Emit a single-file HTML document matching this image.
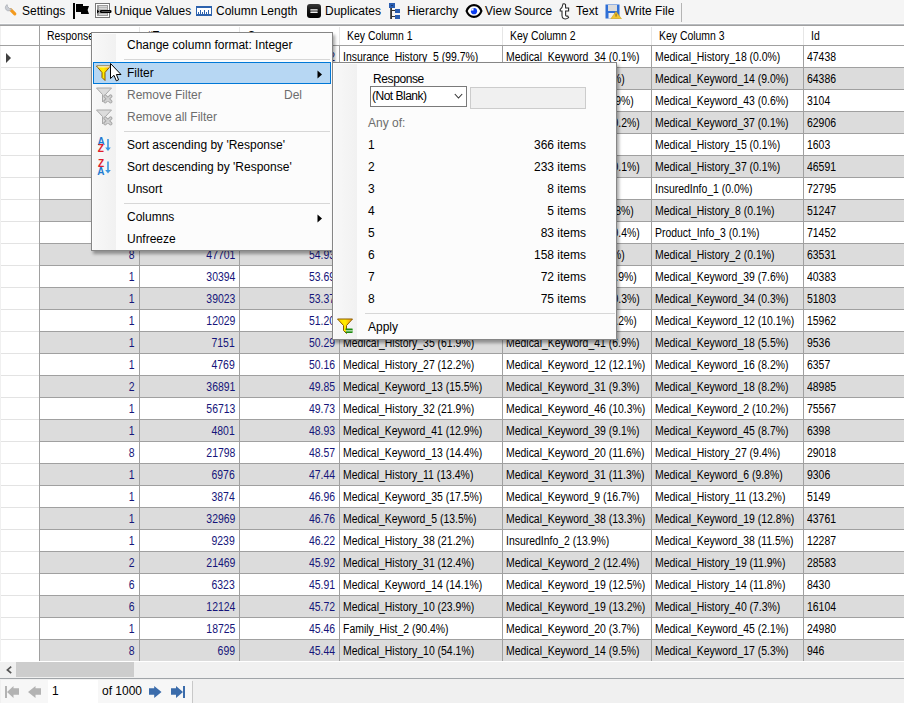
<!DOCTYPE html>
<html><head><meta charset="utf-8">
<style>
*{box-sizing:border-box;margin:0;padding:0}
html,body{width:904px;height:703px;overflow:hidden;background:#f0f0f0;font-family:"Liberation Sans",sans-serif;position:relative}
.a{position:absolute}
/* toolbar */
#tb{position:absolute;left:0;top:0;width:904px;height:24px;background:#f5f5f5}
#tb .ti{position:absolute;top:0;height:23px;line-height:22px;font-size:12px;color:#000;white-space:nowrap}
/* grid */
#hdr{position:absolute;left:0;top:26px;width:904px;height:19px;background:#fff}
#hdr span{position:absolute;top:1px;line-height:19px;font-size:12px;white-space:nowrap;color:#000;transform:scaleX(0.87);transform-origin:0 0}
.r{position:absolute;left:0;width:904px;height:22px;background:#fff;border-bottom:1px solid #a0a0a0}
.r.g{background:#dcdcdc}
.r span{position:absolute;top:1px;line-height:21px;font-size:12px;white-space:nowrap;color:#000;transform:scaleX(0.87);transform-origin:0 0}
.r span.n{color:#15157a;text-align:right;transform-origin:100% 0}
.r span.rt{transform-origin:100% 0}
.vl{position:absolute;width:1px;background:#a0a0a0}
.menu{position:absolute;background:#fcfcfc;border:1px solid #868686;box-shadow:2px 3px 3px rgba(0,0,0,0.35)}
.mi{position:absolute;left:35px;font-size:12px;line-height:22px;white-space:nowrap;color:#000}
.sep{position:absolute;height:1px;background:#d7d7d7}
</style></head><body>
<div id="tb">
  <div class="a" style="left:0;top:23px;width:904px;height:1px;background:#fbfbfb"></div>
  <div class="ti" style="left:22px">Settings</div>
  <div class="ti" style="left:114px">Unique Values</div>
  <div class="ti" style="left:216px">Column Length</div>
  <div class="ti" style="left:325px">Duplicates</div>
  <div class="ti" style="left:407px">Hierarchy</div>
  <div class="ti" style="left:485px">View Source</div>
  <div class="ti" style="left:576px">Text</div>
  <div class="ti" style="left:624px">Write File</div>

  <!-- toolbar icons -->
  <svg class="a" style="left:4px;top:3px" width="14" height="14" viewBox="0 0 14 14">
    <path d="M10.8 10.8 L6.6 6.6" stroke="#f39a1e" stroke-width="3.2" stroke-linecap="round"/>
    <path d="M3.2 1.6 A3.3 3.3 0 1 0 7.6 6 L5.6 5.6 L3.6 3.6 Z" fill="#c9ccd3" stroke="#a9adb5" stroke-width="0.7"/>
  </svg>
  <svg class="a" style="left:73px;top:3px" width="17" height="16" viewBox="0 0 17 16">
    <rect x="0" y="0" width="2" height="16" fill="#000"/>
    <path d="M3 1H10V3H16L14.6 7L16 11H8V9H3Z" fill="#000"/>
  </svg>
  <svg class="a" style="left:95px;top:3px" width="17" height="15" viewBox="0 0 17 15">
    <rect x="0.5" y="0.5" width="14" height="14" fill="#fff" stroke="#777"/>
    <rect x="2" y="2" width="11" height="11" fill="#9c9c9c"/>
    <rect x="4" y="3.2" width="8" height="1.2" fill="#e4e4e4"/>
    <rect x="4" y="5.2" width="8" height="1.2" fill="#e4e4e4"/>
    <rect x="4" y="10.6" width="8" height="1.2" fill="#e4e4e4"/>
    <rect x="5" y="7" width="11.5" height="3" rx="1.3" fill="#000"/>
    <rect x="6.5" y="8.2" width="8.5" height="0.7" fill="#777"/>
    <path d="M2 6.6 L4.4 8.5 L2 10.4Z" fill="#000"/>
  </svg>
  <svg class="a" style="left:196px;top:6px" width="16" height="10" viewBox="0 0 16 10">
    <rect x="0" y="0" width="16" height="10" fill="#2d62ad"/>
    <rect x="1" y="2" width="14" height="6" fill="#fff"/>
    <path d="M2.5 6V8M4.5 4V8M6.5 6V8M8.5 4V8M10.5 6V8M12.5 4V8" stroke="#2d62ad" stroke-width="1"/>
  </svg>
  <svg class="a" style="left:307px;top:4px" width="14" height="14" viewBox="0 0 14 14">
    <defs><linearGradient id="dg" x1="0" y1="0" x2="0" y2="1"><stop offset="0" stop-color="#3a3a3a"/><stop offset="0.5" stop-color="#111"/><stop offset="1" stop-color="#000"/></linearGradient></defs>
    <rect x="0" y="0" width="14" height="14" rx="3" fill="url(#dg)"/>
    <rect x="3.2" y="5.2" width="7.6" height="1.4" rx="0.7" fill="#fff"/>
    <rect x="3.2" y="7.6" width="7.6" height="1.4" rx="0.7" fill="#eee"/>
  </svg>
  <svg class="a" style="left:389px;top:3px" width="12" height="17" viewBox="0 0 12 17">
    <rect x="0" y="0" width="6" height="5" fill="#2a5db0"/>
    <rect x="2" y="2" width="2" height="1" fill="#163a70"/>
    <rect x="1.2" y="5" width="1.8" height="11" fill="#333"/>
    <path d="M3 7.5H6M3 13.5H6" stroke="#333" stroke-width="1"/>
    <rect x="6" y="6" width="5" height="4" fill="#2a5db0"/>
    <rect x="6" y="12" width="5" height="4" fill="#2a5db0"/>
  </svg>
  <svg class="a" style="left:465px;top:3px" width="18" height="16" viewBox="0 0 18 16">
    <path d="M1.6 8 C3.2 3.4 5.8 2.1 9 2.1 C12.2 2.1 14.8 3.4 16.4 8 C14.8 12.6 12.2 13.9 9 13.9 C5.8 13.9 3.2 12.6 1.6 8Z" fill="#fff" stroke="#000" stroke-width="2.2"/>
    <circle cx="9" cy="8.2" r="3.1" fill="#0a3cf0"/>
    <path d="M5.9 7.6 Q6.1 5.3 8.5 5.1 L8.5 7.6Z" fill="#fff"/>
  </svg>
  <svg class="a" style="left:559px;top:3px" width="12" height="17" viewBox="0 0 12 17">
    <path d="M4 1 Q5.5 0.4 6.5 1.5 L6.6 5 L9.6 5 L9.6 8 L6.6 8 L6.6 12.2 Q6.8 13.4 8.8 13 L9.6 14.6 Q7 16.6 4.6 15.6 Q3 14.8 3 12.5 L3 8 L1.2 8 L1.2 6.4 Q3.4 5 4 1Z" fill="#fff" stroke="#2a2a2a" stroke-width="1.1"/>
  </svg>
  <svg class="a" style="left:605px;top:4px" width="17" height="15" viewBox="0 0 17 15">
    <rect x="0.5" y="0.5" width="14" height="14" fill="#2f6fd6"/>
    <rect x="3" y="1" width="9" height="6" fill="#dcdcdc"/>
    <rect x="3.5" y="9" width="6" height="5.5" fill="#f0f0f0"/>
    <path d="M11 7.5 L16.5 14.8 L5.8 14.8 Z" fill="#f2c531" stroke="#c99a10" stroke-width="0.5"/>
    <rect x="10.6" y="9.6" width="0.9" height="3" fill="#7a5a10"/>
  </svg>
  <div class="a" style="left:681px;top:3px;width:1px;height:19px;background:#b4b4b4"></div>
</div>
<div class="a" style="left:0;top:24px;width:904px;height:1px;background:#b9bcc0"></div>
<div class="a" style="left:0;top:25px;width:904px;height:1px;background:#a0a0a0"></div>

<div id="hdr">
  <span style="left:47px">Response</span>
  <span style="left:147px">#Tr</span>
  <span style="left:248px">Score</span>
  <span style="left:347px">Key Column 1</span>
  <span style="left:510px">Key Column 2</span>
  <span style="left:659px">Key Column 3</span>
  <span style="left:811px">Id</span>
</div>
<div class="a" style="left:0;top:45px;width:904px;height:1px;background:#a0a0a0"></div>

<div class="r" style="top:46px">
<span class="n" style="right:769px">1</span>
<span class="n" style="right:669px">1</span>
<span class="n" style="right:569px">57.22</span>
<span class="t" style="left:343px">Insurance_History_5 (99.7%)</span>
<span class="t" style="left:506px">Medical_Keyword_34 (0.1%)</span>
<span class="t" style="left:655px">Medical_History_18 (0.0%)</span>
<span class="t" style="left:807px">47438</span>
</div>
<div class="r g" style="top:68px">
<span class="n" style="right:769px"></span>
<span class="n" style="right:669px"></span>
<span class="n" style="right:569px"></span>
<span class="t" style="left:343px"></span>
<span class="t rt" style="right:279px">Medical_Keyword_3 (5%)</span>
<span class="t" style="left:655px">Medical_Keyword_14 (9.0%)</span>
<span class="t" style="left:807px">64386</span>
</div>
<div class="r" style="top:90px">
<span class="n" style="right:769px"></span>
<span class="n" style="right:669px"></span>
<span class="n" style="right:569px"></span>
<span class="t" style="left:343px"></span>
<span class="t rt" style="right:270px">Medical_Keyword_3 (0.9%)</span>
<span class="t" style="left:655px">Medical_Keyword_43 (0.6%)</span>
<span class="t" style="left:807px">3104</span>
</div>
<div class="r g" style="top:112px">
<span class="n" style="right:769px"></span>
<span class="n" style="right:669px"></span>
<span class="n" style="right:569px"></span>
<span class="t" style="left:343px"></span>
<span class="t rt" style="right:264.5px">Medical_Keyword_3 (0.2%)</span>
<span class="t" style="left:655px">Medical_Keyword_37 (0.1%)</span>
<span class="t" style="left:807px">62906</span>
</div>
<div class="r" style="top:134px">
<span class="n" style="right:769px"></span>
<span class="n" style="right:669px"></span>
<span class="n" style="right:569px"></span>
<span class="t" style="left:343px"></span>
<span class="t" style="left:655px">Medical_History_15 (0.1%)</span>
<span class="t" style="left:807px">1603</span>
</div>
<div class="r g" style="top:156px">
<span class="n" style="right:769px"></span>
<span class="n" style="right:669px"></span>
<span class="n" style="right:569px"></span>
<span class="t" style="left:343px"></span>
<span class="t rt" style="right:264.5px">Medical_Keyword_3 (0.1%)</span>
<span class="t" style="left:655px">Medical_History_37 (0.1%)</span>
<span class="t" style="left:807px">46591</span>
</div>
<div class="r" style="top:178px">
<span class="n" style="right:769px"></span>
<span class="n" style="right:669px"></span>
<span class="n" style="right:569px"></span>
<span class="t" style="left:343px"></span>
<span class="t" style="left:655px">InsuredInfo_1 (0.0%)</span>
<span class="t" style="left:807px">72795</span>
</div>
<div class="r g" style="top:200px">
<span class="n" style="right:769px"></span>
<span class="n" style="right:669px"></span>
<span class="n" style="right:569px"></span>
<span class="t" style="left:343px"></span>
<span class="t rt" style="right:270px">Medical_Keyword_3 (3.8%)</span>
<span class="t" style="left:655px">Medical_History_8 (0.1%)</span>
<span class="t" style="left:807px">51247</span>
</div>
<div class="r" style="top:222px">
<span class="n" style="right:769px"></span>
<span class="n" style="right:669px"></span>
<span class="n" style="right:569px"></span>
<span class="t" style="left:343px"></span>
<span class="t rt" style="right:264px">Medical_Keyword_3 (0.4%)</span>
<span class="t" style="left:655px">Product_Info_3 (0.1%)</span>
<span class="t" style="left:807px">71452</span>
</div>
<div class="r g" style="top:244px">
<span class="n" style="right:769px">8</span>
<span class="n" style="right:669px">47701</span>
<span class="n" style="right:569px">54.93</span>
<span class="t" style="left:343px"></span>
<span class="t rt" style="right:279px">Medical_Keyword_3 (6%)</span>
<span class="t" style="left:655px">Medical_History_2 (0.1%)</span>
<span class="t" style="left:807px">63531</span>
</div>
<div class="r" style="top:266px">
<span class="n" style="right:769px">1</span>
<span class="n" style="right:669px">30394</span>
<span class="n" style="right:569px">53.69</span>
<span class="t" style="left:343px"></span>
<span class="t rt" style="right:267px">Medical_Keyword_3 (6.9%)</span>
<span class="t" style="left:655px">Medical_Keyword_39 (7.6%)</span>
<span class="t" style="left:807px">40383</span>
</div>
<div class="r g" style="top:288px">
<span class="n" style="right:769px">1</span>
<span class="n" style="right:669px">39023</span>
<span class="n" style="right:569px">53.37</span>
<span class="t" style="left:343px"></span>
<span class="t rt" style="right:264px">Medical_Keyword_3 (0.3%)</span>
<span class="t" style="left:655px">Medical_Keyword_34 (0.3%)</span>
<span class="t" style="left:807px">51803</span>
</div>
<div class="r" style="top:310px">
<span class="n" style="right:769px">1</span>
<span class="n" style="right:669px">12029</span>
<span class="n" style="right:569px">51.20</span>
<span class="t" style="left:343px"></span>
<span class="t rt" style="right:267px">Medical_Keyword_3 (7.2%)</span>
<span class="t" style="left:655px">Medical_Keyword_12 (10.1%)</span>
<span class="t" style="left:807px">15962</span>
</div>
<div class="r g" style="top:332px">
<span class="n" style="right:769px">1</span>
<span class="n" style="right:669px">7151</span>
<span class="n" style="right:569px">50.29</span>
<span class="t" style="left:343px">Medical_History_35 (61.9%)</span>
<span class="t" style="left:506px">Medical_Keyword_41 (6.9%)</span>
<span class="t" style="left:655px">Medical_Keyword_18 (5.5%)</span>
<span class="t" style="left:807px">9536</span>
</div>
<div class="r" style="top:354px">
<span class="n" style="right:769px">1</span>
<span class="n" style="right:669px">4769</span>
<span class="n" style="right:569px">50.16</span>
<span class="t" style="left:343px">Medical_History_27 (12.2%)</span>
<span class="t" style="left:506px">Medical_Keyword_12 (12.1%)</span>
<span class="t" style="left:655px">Medical_Keyword_16 (8.2%)</span>
<span class="t" style="left:807px">6357</span>
</div>
<div class="r g" style="top:376px">
<span class="n" style="right:769px">2</span>
<span class="n" style="right:669px">36891</span>
<span class="n" style="right:569px">49.85</span>
<span class="t" style="left:343px">Medical_Keyword_13 (15.5%)</span>
<span class="t" style="left:506px">Medical_Keyword_31 (9.3%)</span>
<span class="t" style="left:655px">Medical_Keyword_18 (8.2%)</span>
<span class="t" style="left:807px">48985</span>
</div>
<div class="r" style="top:398px">
<span class="n" style="right:769px">1</span>
<span class="n" style="right:669px">56713</span>
<span class="n" style="right:569px">49.73</span>
<span class="t" style="left:343px">Medical_History_32 (21.9%)</span>
<span class="t" style="left:506px">Medical_Keyword_46 (10.3%)</span>
<span class="t" style="left:655px">Medical_Keyword_2 (10.2%)</span>
<span class="t" style="left:807px">75567</span>
</div>
<div class="r g" style="top:420px">
<span class="n" style="right:769px">1</span>
<span class="n" style="right:669px">4801</span>
<span class="n" style="right:569px">48.93</span>
<span class="t" style="left:343px">Medical_Keyword_41 (12.9%)</span>
<span class="t" style="left:506px">Medical_Keyword_39 (9.1%)</span>
<span class="t" style="left:655px">Medical_Keyword_45 (8.7%)</span>
<span class="t" style="left:807px">6398</span>
</div>
<div class="r" style="top:442px">
<span class="n" style="right:769px">8</span>
<span class="n" style="right:669px">21798</span>
<span class="n" style="right:569px">48.57</span>
<span class="t" style="left:343px">Medical_Keyword_13 (14.4%)</span>
<span class="t" style="left:506px">Medical_Keyword_20 (11.6%)</span>
<span class="t" style="left:655px">Medical_History_27 (9.4%)</span>
<span class="t" style="left:807px">29018</span>
</div>
<div class="r g" style="top:464px">
<span class="n" style="right:769px">1</span>
<span class="n" style="right:669px">6976</span>
<span class="n" style="right:569px">47.44</span>
<span class="t" style="left:343px">Medical_History_11 (13.4%)</span>
<span class="t" style="left:506px">Medical_Keyword_31 (11.3%)</span>
<span class="t" style="left:655px">Medical_Keyword_6 (9.8%)</span>
<span class="t" style="left:807px">9306</span>
</div>
<div class="r" style="top:486px">
<span class="n" style="right:769px">1</span>
<span class="n" style="right:669px">3874</span>
<span class="n" style="right:569px">46.96</span>
<span class="t" style="left:343px">Medical_Keyword_35 (17.5%)</span>
<span class="t" style="left:506px">Medical_Keyword_9 (16.7%)</span>
<span class="t" style="left:655px">Medical_History_11 (13.2%)</span>
<span class="t" style="left:807px">5149</span>
</div>
<div class="r g" style="top:508px">
<span class="n" style="right:769px">1</span>
<span class="n" style="right:669px">32969</span>
<span class="n" style="right:569px">46.76</span>
<span class="t" style="left:343px">Medical_Keyword_5 (13.5%)</span>
<span class="t" style="left:506px">Medical_Keyword_38 (13.3%)</span>
<span class="t" style="left:655px">Medical_Keyword_19 (12.8%)</span>
<span class="t" style="left:807px">43761</span>
</div>
<div class="r" style="top:530px">
<span class="n" style="right:769px">1</span>
<span class="n" style="right:669px">9239</span>
<span class="n" style="right:569px">46.22</span>
<span class="t" style="left:343px">Medical_History_38 (21.2%)</span>
<span class="t" style="left:506px">InsuredInfo_2 (13.9%)</span>
<span class="t" style="left:655px">Medical_Keyword_38 (11.5%)</span>
<span class="t" style="left:807px">12287</span>
</div>
<div class="r g" style="top:552px">
<span class="n" style="right:769px">2</span>
<span class="n" style="right:669px">21469</span>
<span class="n" style="right:569px">45.92</span>
<span class="t" style="left:343px">Medical_History_31 (12.4%)</span>
<span class="t" style="left:506px">Medical_Keyword_2 (12.4%)</span>
<span class="t" style="left:655px">Medical_History_19 (11.9%)</span>
<span class="t" style="left:807px">28583</span>
</div>
<div class="r" style="top:574px">
<span class="n" style="right:769px">6</span>
<span class="n" style="right:669px">6323</span>
<span class="n" style="right:569px">45.91</span>
<span class="t" style="left:343px">Medical_Keyword_14 (14.1%)</span>
<span class="t" style="left:506px">Medical_Keyword_19 (12.5%)</span>
<span class="t" style="left:655px">Medical_History_14 (11.8%)</span>
<span class="t" style="left:807px">8430</span>
</div>
<div class="r g" style="top:596px">
<span class="n" style="right:769px">6</span>
<span class="n" style="right:669px">12124</span>
<span class="n" style="right:569px">45.72</span>
<span class="t" style="left:343px">Medical_History_10 (23.9%)</span>
<span class="t" style="left:506px">Medical_Keyword_19 (13.2%)</span>
<span class="t" style="left:655px">Medical_History_40 (7.3%)</span>
<span class="t" style="left:807px">16104</span>
</div>
<div class="r" style="top:618px">
<span class="n" style="right:769px">1</span>
<span class="n" style="right:669px">18725</span>
<span class="n" style="right:569px">45.46</span>
<span class="t" style="left:343px">Family_Hist_2 (90.4%)</span>
<span class="t" style="left:506px">Medical_Keyword_20 (3.7%)</span>
<span class="t" style="left:655px">Medical_Keyword_45 (2.1%)</span>
<span class="t" style="left:807px">24980</span>
</div>
<div class="r g" style="top:640px">
<span class="n" style="right:769px">8</span>
<span class="n" style="right:669px">699</span>
<span class="n" style="right:569px">45.44</span>
<span class="t" style="left:343px">Medical_History_10 (54.1%)</span>
<span class="t" style="left:506px">Medical_Keyword_14 (9.5%)</span>
<span class="t" style="left:655px">Medical_Keyword_17 (5.3%)</span>
<span class="t" style="left:807px">946</span>
</div>

<!-- row header column -->
<div class="a" style="left:0;top:26px;width:1px;height:19px;background:#f0f0f0"></div><div class="a" style="left:0;top:46px;width:1px;height:616px;background:#f0f0f0"></div>
<div id="rh" class="a" style="left:1px;top:46px;width:38px;height:615px;background:repeating-linear-gradient(to bottom,#fff 0,#fff 21px,#e3e3e3 21px,#e3e3e3 22px)"></div>
<svg class="a" style="left:6px;top:53px" width="6" height="10"><path d="M0 0L5 5L0 10Z" fill="#404040"/></svg>
<!-- vertical lines -->
<div class="vl" style="left:39px;top:26px;height:636px"></div>
<div class="vl" style="left:139px;top:46px;height:615px"></div>
<div class="vl" style="left:239px;top:46px;height:615px"></div>
<div class="vl" style="left:339px;top:46px;height:615px"></div>
<div class="vl" style="left:502px;top:46px;height:615px"></div>
<div class="vl" style="left:651px;top:46px;height:615px"></div>
<div class="vl" style="left:803px;top:46px;height:615px"></div>
<div class="vl" style="left:139px;top:27px;height:18px;background:#e6e6e6"></div>
<div class="vl" style="left:239px;top:27px;height:18px;background:#e6e6e6"></div>
<div class="vl" style="left:339px;top:27px;height:18px;background:#e6e6e6"></div>
<div class="vl" style="left:502px;top:27px;height:18px;background:#e6e6e6"></div>
<div class="vl" style="left:651px;top:27px;height:18px;background:#e6e6e6"></div>
<div class="vl" style="left:803px;top:27px;height:18px;background:#e6e6e6"></div>
<div class="a" style="left:0;top:661px;width:904px;height:1px;background:#fff"></div>

<!-- horizontal scrollbar -->
<div class="a" style="left:0;top:662px;width:904px;height:16px;background:#f0f0f0"></div>
<div class="a" style="left:16px;top:662px;width:118px;height:15px;background:#cdcdcd"></div>
<svg class="a" style="left:3px;top:665px" width="9" height="10"><path d="M8.2 1.6L4.4 4.9L8.2 8.2" stroke="#555" stroke-width="1.7" fill="none"/></svg>

<!-- pager -->
<div class="a" style="left:0;top:678px;width:904px;height:1px;background:#a0a4a8"></div>
<div class="a" style="left:0;top:679px;width:904px;height:24px;background:#f0f0f0"></div>
<div class="a" style="left:1px;top:680px;width:191px;height:23px;background:#f7f7f7"></div>
<div class="a" style="left:48px;top:680px;width:50px;height:23px;background:#fff"></div>
<div class="a" style="left:52px;top:680px;font-size:12px;line-height:22px">1</div>
<div class="a" style="left:102px;top:680px;font-size:12px;line-height:22px">of 1000</div>

<svg class="a" style="left:5px;top:686px" width="15" height="12" viewBox="0 0 15 12">
  <rect x="0" y="0" width="2" height="12" fill="#b3b3b3"/>
  <path d="M2 6L8.5 0V2.2H14V8.8H8.5V12Z" fill="#b3b3b3"/>
</svg>
<svg class="a" style="left:28px;top:686px" width="14" height="12" viewBox="0 0 14 12">
  <path d="M0 6L7.5 0V2.2H13V8.8H7.5V12Z" fill="#b3b3b3"/>
</svg>
<svg class="a" style="left:149px;top:686px" width="13" height="12" viewBox="0 0 13 12">
  <path d="M12.5 6L5.2 0V2.2H0V8.8H5.2V12Z" fill="#3b6cab"/>
</svg>
<svg class="a" style="left:171px;top:686px" width="15" height="12" viewBox="0 0 15 12">
  <path d="M12 6L5 0V2.2H0V8.8H5V12Z" fill="#3b6cab"/>
  <rect x="12" y="0" width="2" height="12" fill="#3b6cab"/>
</svg>
<div class="a" style="left:192px;top:681px;width:1px;height:22px;background:#c8c8c8"></div>

<!-- context menu -->
<div class="menu" style="left:91px;top:32px;width:242px;height:219px">
  <div class="a" style="left:1px;top:1px;width:23px;height:216px;background:linear-gradient(to right,#f8f8f8,#f1f1f1)"></div>
  <div class="a" style="left:1px;top:29px;width:238px;height:22px;background:#b7d7f3;border:1px solid #0078d7"></div>
  <div class="mi" style="top:1px">Change column format: Integer</div>

  <svg class="a" style="left:4px;top:32px" width="16" height="17" viewBox="0 0 16 17">
    <defs><linearGradient id="fg" x1="0" y1="0" x2="1" y2="0"><stop offset="0" stop-color="#ffd400"/><stop offset="0.5" stop-color="#ffee00"/><stop offset="1" stop-color="#ff9a10"/></linearGradient></defs>
    <path d="M0.5 1 H14.5 L9 7.5 V15.5 L6 12.5 V7.5 Z" fill="url(#fg)" stroke="#8a5a00" stroke-width="1"/>
    <path d="M1.5 1.8 H13.5" stroke="#fff" stroke-width="1"/>
  </svg>
  <svg class="a" style="left:225px;top:37px" width="6" height="9" viewBox="0 0 6 9"><path d="M0.5 0.5L5 4.5L0.5 8.5Z" fill="#000"/></svg>
  <svg class="a" style="left:225px;top:181px" width="6" height="9" viewBox="0 0 6 9"><path d="M0.5 0.5L5 4.5L0.5 8.5Z" fill="#000"/></svg>
  <svg class="a" style="left:4px;top:54px" width="17" height="17" viewBox="0 0 17 17">
    <path d="M0.5 1 H15.5 L9.5 7.5 V12 L6.5 15 V7.5 Z" fill="#dcdcdc" stroke="#a8a8a8" stroke-width="1"/>
    <path d="M9.2 9.2L14.6 14.6M14.6 9.2L9.2 14.6" stroke="#a9a9a9" stroke-width="3.6" stroke-linecap="round"/>
    <path d="M9.2 9.2L14.6 14.6M14.6 9.2L9.2 14.6" stroke="#d2d2d2" stroke-width="1.6" stroke-linecap="round"/>
  </svg>
  <svg class="a" style="left:4px;top:76px" width="17" height="17" viewBox="0 0 17 17">
    <path d="M0.5 1 H15.5 L9.5 7.5 V12 L6.5 15 V7.5 Z" fill="#dcdcdc" stroke="#a8a8a8" stroke-width="1"/>
    <path d="M9.2 9.2L14.6 14.6M14.6 9.2L9.2 14.6" stroke="#a9a9a9" stroke-width="3.6" stroke-linecap="round"/>
    <path d="M9.2 9.2L14.6 14.6M14.6 9.2L9.2 14.6" stroke="#d2d2d2" stroke-width="1.6" stroke-linecap="round"/>
  </svg>
  <svg class="a" style="left:5px;top:104px" width="15" height="17" viewBox="0 0 15 17">
    <text x="0.5" y="7.5" font-family="Liberation Sans" font-weight="bold" font-size="10" fill="#1f7ad0">A</text>
    <text x="0.8" y="15" font-family="Liberation Sans" font-weight="bold" font-size="10" fill="#e0202a">Z</text>
    <path d="M11 2V12" stroke="#3a96e0" stroke-width="1.6"/>
    <path d="M8.2 10.5L11 14L13.8 10.5Z" fill="#3a96e0"/>
  </svg>
  <svg class="a" style="left:5px;top:126px" width="15" height="17" viewBox="0 0 15 17">
    <text x="1" y="8" font-family="Liberation Sans" font-weight="bold" font-size="10" fill="#e0202a">Z</text>
    <text x="0.3" y="15.5" font-family="Liberation Sans" font-weight="bold" font-size="10" fill="#1f7ad0">A</text>
    <path d="M11 2.5V12.5" stroke="#3a96e0" stroke-width="1.6"/>
    <path d="M8.2 11L11 14.5L13.8 11Z" fill="#3a96e0"/>
  </svg>
  <!-- cursor -->
  <svg class="a" style="left:18px;top:30px" width="13" height="20" viewBox="0 0 13 20">
    <path d="M0.5 0.5 L0.5 15.5 L4 12.3 L6.3 17.8 L8.6 16.8 L6.4 11.5 L11 11.5 Z" fill="#fff" stroke="#000" stroke-width="1"/>
  </svg>

  <div class="sep" style="left:32px;top:26px;width:206px"></div>
  <div class="mi" style="top:29px">Filter</div>
  <div class="mi" style="top:51px;color:#6d6d6d">Remove Filter</div>
  <div class="mi" style="top:51px;left:192px;color:#6d6d6d">Del</div>
  <div class="mi" style="top:73px;color:#6d6d6d">Remove all Filter</div>
  <div class="sep" style="left:32px;top:98px;width:206px"></div>
  <div class="mi" style="top:101px">Sort ascending by 'Response'</div>
  <div class="mi" style="top:123px">Sort descending by 'Response'</div>
  <div class="mi" style="top:145px">Unsort</div>
  <div class="sep" style="left:32px;top:170px;width:206px"></div>
  <div class="mi" style="top:173px">Columns</div>
  <div class="mi" style="top:195px">Unfreeze</div>
</div>

<!-- filter panel -->
<div class="menu" style="left:332px;top:62px;width:285px;height:278px">
  <div class="a" style="left:1px;top:1px;width:23px;height:275px;background:linear-gradient(to right,#f8f8f8,#f1f1f1)"></div>
  <div class="mi" style="left:40px;top:5px;letter-spacing:-0.4px">Response</div>
  <div class="a" style="left:37px;top:23px;width:97px;height:21px;background:#fff;border:1px solid #7a7a7a"></div>
  <div class="mi" style="left:39px;top:22px;letter-spacing:-0.5px">(Not Blank)</div>
  <svg class="a" style="left:121px;top:30px" width="10" height="7" viewBox="0 0 10 7"><path d="M0.8 1L4.5 5L8.2 1" stroke="#333" stroke-width="1.1" fill="none"/></svg>
  <div class="a" style="left:137px;top:24px;width:116px;height:22px;background:#f0f0f0;border:1px solid #cccccc"></div>
  <div class="mi" style="left:35px;top:49px;color:#6d6d6d">Any of:</div>
  <div class="mi" style="left:35px;top:71px">1</div>
  <div class="mi" style="left:0;width:253px;text-align:right;top:71px">366 items</div>
  <div class="mi" style="left:35px;top:93px">2</div>
  <div class="mi" style="left:0;width:253px;text-align:right;top:93px">233 items</div>
  <div class="mi" style="left:35px;top:115px">3</div>
  <div class="mi" style="left:0;width:253px;text-align:right;top:115px">8 items</div>
  <div class="mi" style="left:35px;top:137px">4</div>
  <div class="mi" style="left:0;width:253px;text-align:right;top:137px">5 items</div>
  <div class="mi" style="left:35px;top:159px">5</div>
  <div class="mi" style="left:0;width:253px;text-align:right;top:159px">83 items</div>
  <div class="mi" style="left:35px;top:181px">6</div>
  <div class="mi" style="left:0;width:253px;text-align:right;top:181px">158 items</div>
  <div class="mi" style="left:35px;top:203px">7</div>
  <div class="mi" style="left:0;width:253px;text-align:right;top:203px">72 items</div>
  <div class="mi" style="left:35px;top:225px">8</div>
  <div class="mi" style="left:0;width:253px;text-align:right;top:225px">75 items</div>
  <svg class="a" style="left:4px;top:255px" width="17" height="17" viewBox="0 0 17 17">
    <defs><linearGradient id="fg2" x1="0" y1="0" x2="1" y2="0"><stop offset="0" stop-color="#ffd400"/><stop offset="0.5" stop-color="#ffee00"/><stop offset="1" stop-color="#ff9a10"/></linearGradient></defs>
    <path d="M0.5 1 H15.5 L9.5 7.5 V15.5 L6.5 12.5 V7.5 Z" fill="url(#fg2)" stroke="#8a5a00" stroke-width="1"/>
    <rect x="9" y="11" width="7" height="3" fill="#a8d8a0"/><path d="M8.5 11.3H15.5M8.5 14.3H15.5" stroke="#1e8a10" stroke-width="1.5"/>
  </svg>
  <div class="sep" style="left:32px;top:250px;width:250px"></div>
  <div class="mi" style="left:35px;top:253px">Apply</div>
</div>
</body></html>
